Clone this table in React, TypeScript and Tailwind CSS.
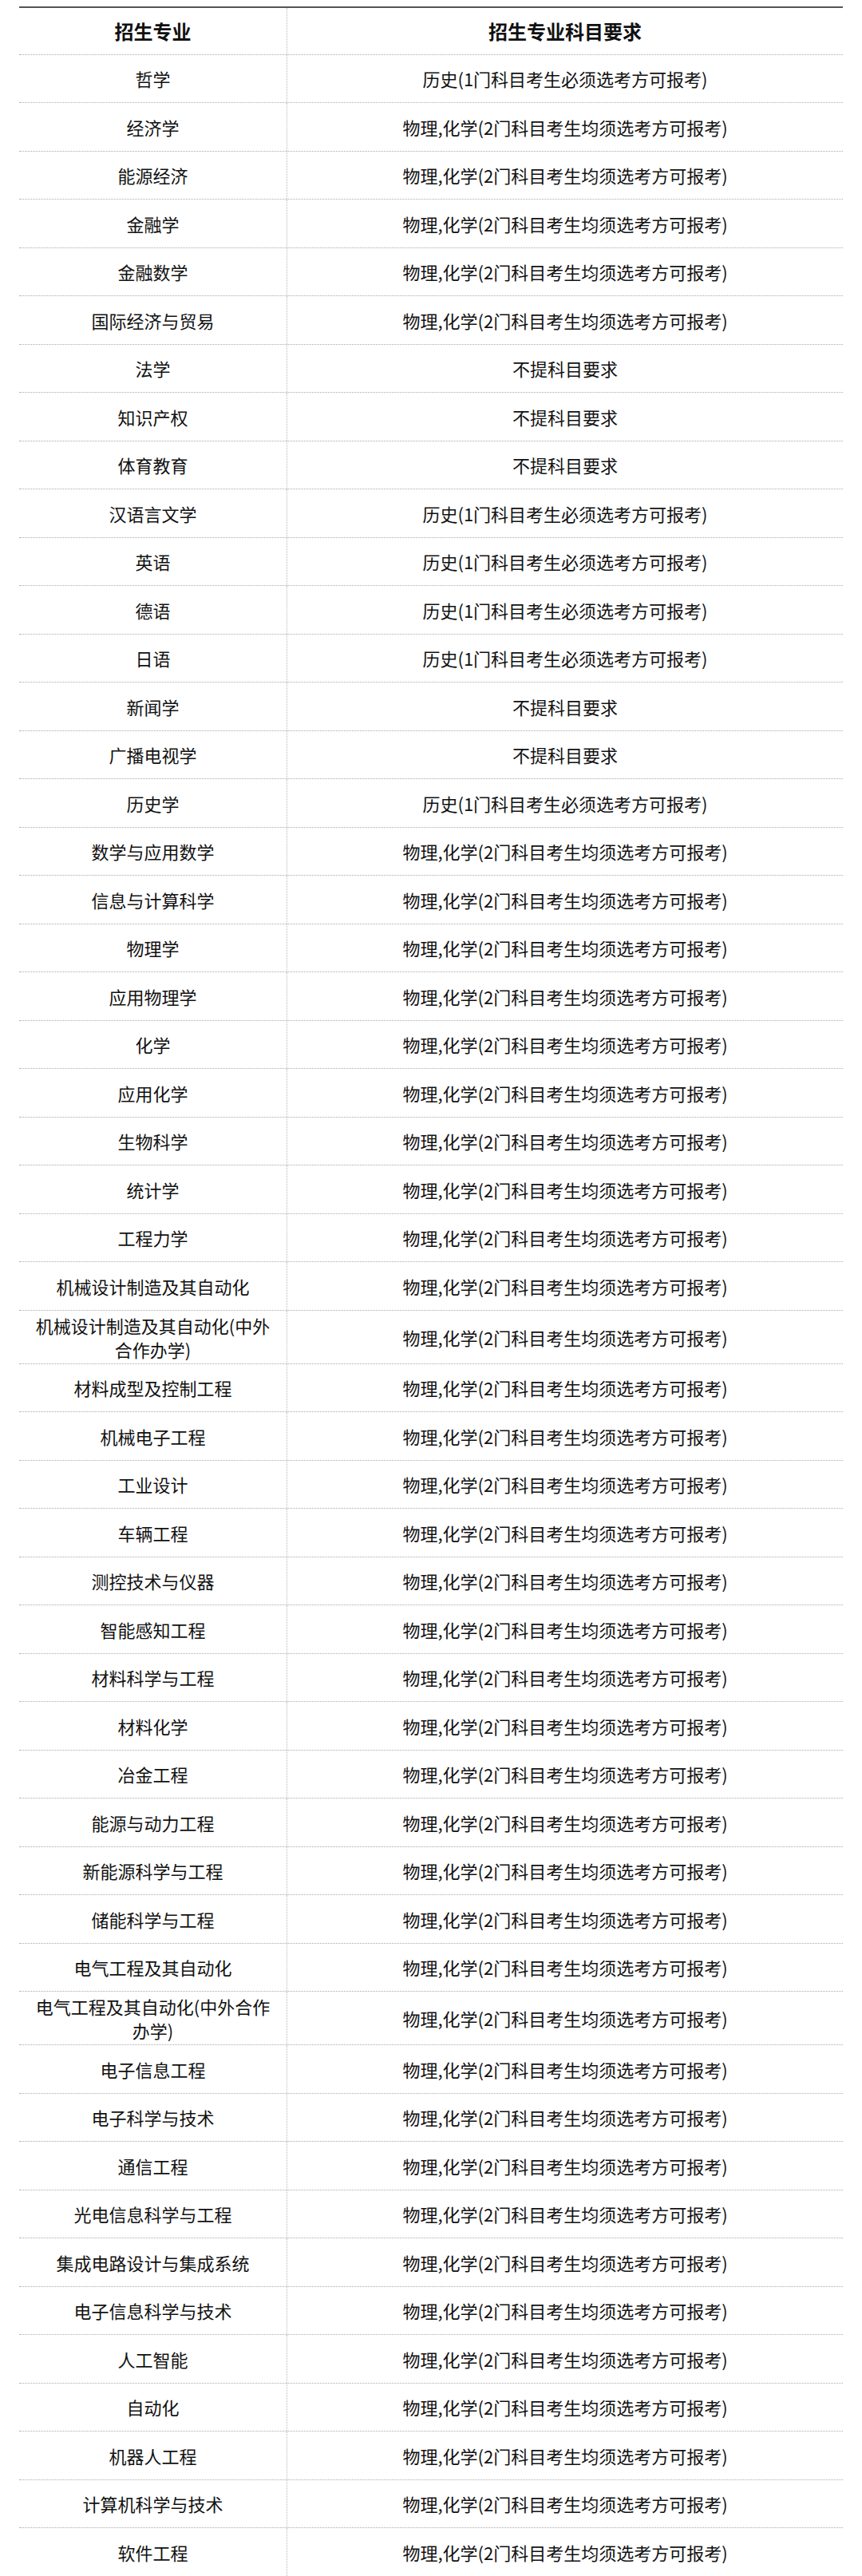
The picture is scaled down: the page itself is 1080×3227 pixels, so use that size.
import React from 'react';

type Row = { major: string; req: string };

const HIST = '历史(1门科目考生必须选考方可报考)';
const PHYS = '物理,化学(2门科目考生均须选考方可报考)';
const NONE = '不提科目要求';

const rows: Row[] = [
    { major: '哲学', req: HIST },
    { major: '经济学', req: PHYS },
    { major: '能源经济', req: PHYS },
    { major: '金融学', req: PHYS },
    { major: '金融数学', req: PHYS },
    { major: '国际经济与贸易', req: PHYS },
    { major: '法学', req: NONE },
    { major: '知识产权', req: NONE },
    { major: '体育教育', req: NONE },
    { major: '汉语言文学', req: HIST },
    { major: '英语', req: HIST },
    { major: '德语', req: HIST },
    { major: '日语', req: HIST },
    { major: '新闻学', req: NONE },
    { major: '广播电视学', req: NONE },
    { major: '历史学', req: HIST },
    { major: '数学与应用数学', req: PHYS },
    { major: '信息与计算科学', req: PHYS },
    { major: '物理学', req: PHYS },
    { major: '应用物理学', req: PHYS },
    { major: '化学', req: PHYS },
    { major: '应用化学', req: PHYS },
    { major: '生物科学', req: PHYS },
    { major: '统计学', req: PHYS },
    { major: '工程力学', req: PHYS },
    { major: '机械设计制造及其自动化', req: PHYS },
    { major: '机械设计制造及其自动化(中外合作办学)', req: PHYS },
    { major: '材料成型及控制工程', req: PHYS },
    { major: '机械电子工程', req: PHYS },
    { major: '工业设计', req: PHYS },
    { major: '车辆工程', req: PHYS },
    { major: '测控技术与仪器', req: PHYS },
    { major: '智能感知工程', req: PHYS },
    { major: '材料科学与工程', req: PHYS },
    { major: '材料化学', req: PHYS },
    { major: '冶金工程', req: PHYS },
    { major: '能源与动力工程', req: PHYS },
    { major: '新能源科学与工程', req: PHYS },
    { major: '储能科学与工程', req: PHYS },
    { major: '电气工程及其自动化', req: PHYS },
    { major: '电气工程及其自动化(中外合作办学)', req: PHYS },
    { major: '电子信息工程', req: PHYS },
    { major: '电子科学与技术', req: PHYS },
    { major: '通信工程', req: PHYS },
    { major: '光电信息科学与工程', req: PHYS },
    { major: '集成电路设计与集成系统', req: PHYS },
    { major: '电子信息科学与技术', req: PHYS },
    { major: '人工智能', req: PHYS },
    { major: '自动化', req: PHYS },
    { major: '机器人工程', req: PHYS },
    { major: '计算机科学与技术', req: PHYS },
    { major: '软件工程', req: PHYS },
];

const App = () => {
    return (
        <div
            className="bg-white px-[24px] pt-[8px] text-[#111]"
            style={{ fontFamily: '"Noto Sans CJK SC", "Noto Sans", sans-serif' }}
        >
            <div className="border-t-2 border-[#555]">
                {/* header */}
                <div className="grid grid-cols-[336px_1fr] border-b border-dotted border-[#aaa]">
                    <div className="flex min-h-[57.5px] items-center justify-center border-r border-dotted border-[#bbb] px-3 text-[24px] font-bold leading-[30px]">
                        招生专业
                    </div>
                    <div className="flex min-h-[57.5px] items-center justify-center px-3 text-[24px] font-bold leading-[30px]">
                        招生专业科目要求
                    </div>
                </div>

                {rows.map((r) => (
                    <div
                        key={r.major}
                        className="grid grid-cols-[336px_1fr] border-b border-dotted border-[#aaa]"
                    >
                        <div className="flex min-h-[59.5px] items-center justify-center border-r border-dotted border-[#bbb] px-3 py-[3px] text-center text-[22px] leading-[30px]">
                            {r.major}
                        </div>
                        <div className="flex min-h-[59.5px] items-center justify-center px-3 py-[3px] text-center text-[22px] leading-[30px]">
                            {r.req}
                        </div>
                    </div>
                ))}
            </div>
        </div>
    );
};

export default App;
